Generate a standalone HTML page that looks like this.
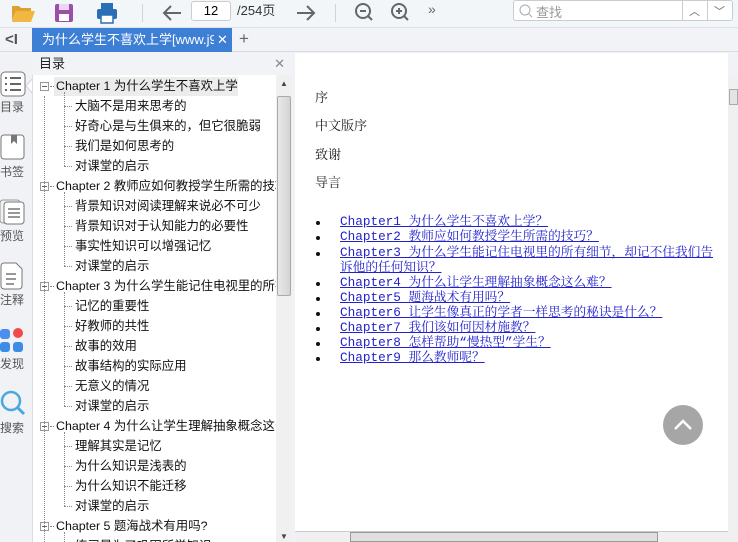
<!DOCTYPE html>
<html><head><meta charset="utf-8"><style>
*{margin:0;padding:0;box-sizing:border-box}
body{width:738px;height:542px;overflow:hidden;background:#f0f2f5;font-family:"Liberation Sans","Noto Sans CJK SC",sans-serif;position:relative}
.abs{position:absolute}
#tb{left:0;top:0;width:738px;height:28px;background:#f3f6f9;border-bottom:1px solid #dde2e8}
#tabbar{left:0;top:28px;width:738px;height:24px;background:#f1f3f6;border-bottom:1px solid #d8dce2}
#tab{left:32px;top:28px;width:200px;height:24px;background:#3e7fd6;color:#fff;font-size:13px;line-height:24px;padding-left:10px;white-space:nowrap;overflow:hidden}
#side{left:0;top:53px;width:32px;height:489px;background:#f0f2f5}
.sl{position:absolute;left:0;width:28px;font-size:12px;color:#555;text-align:left}
#toc{left:32px;top:53px;width:260px;height:489px;background:#fff;border-left:1px solid #d9dde3}
#toch{left:32px;top:53px;width:260px;height:22px;background:#f1f3f6;font-size:13px;line-height:22px;padding-left:7px;color:#222}
.r{position:absolute;font-size:12.4px;color:#111;white-space:nowrap;line-height:18px}
.box{position:absolute;width:9px;height:9px;border:1px solid #999;background:#fff}
.box:after{content:"";position:absolute;left:1px;top:3px;width:5px;height:1px;background:#666}
.dv{position:absolute;border-left:1px dotted #888}
.dh{position:absolute;border-top:1px dotted #888;width:8px}
#vs{left:276px;top:75px;width:16px;height:467px;background:#f0f0f0}
#page{left:295px;top:53px;width:433px;height:478px;background:#fff}
.p{position:absolute;left:315px;font-family:"Liberation Serif","Noto Serif CJK SC",serif;font-size:13px;color:#222}
.li{position:absolute;left:340px;font-family:"Liberation Mono","Noto Serif CJK SC",monospace;font-size:12.7px;color:#2222cc;text-decoration:underline;white-space:nowrap;line-height:15px}
.bu{position:absolute;left:316px;width:4px;height:4px;border-radius:50%;background:#111}
</style></head><body>
<div id="tb" class="abs"></div>
<svg class="abs" style="left:10px;top:2px" width="26" height="22" viewBox="0 0 26 22"><path d="M2 4h7l2 2h10v3H6L2 19z" fill="#e0a030"/><path d="M6 9h19l-4 11H2z" fill="#f0b840"/></svg>
<svg class="abs" style="left:54px;top:3px" width="20" height="20"><rect x="1" y="1" width="18" height="18" rx="2" fill="#9b4fa8"/><rect x="5" y="1" width="10" height="6" fill="#e8d8ee"/><rect x="5" y="11" width="10" height="7" fill="#fff"/></svg>
<svg class="abs" style="left:96px;top:2px" width="22" height="22"><rect x="5" y="1" width="12" height="6" fill="#2a6fb5"/><rect x="1" y="7" width="20" height="10" rx="2" fill="#2a6fb5"/><rect x="5" y="13" width="12" height="8" fill="#fff" stroke="#2a6fb5" stroke-width="1.5"/></svg>
<div class="abs" style="left:142px;top:4px;width:1px;height:18px;background:#d0d4da"></div>
<svg class="abs" style="left:161px;top:3px" width="22" height="20"><path d="M20 10H3M10 3L3 10l7 7" stroke="#666" stroke-width="2" fill="none"/></svg>
<div class="abs" style="left:191px;top:1px;width:40px;height:20px;border:1px solid #c8cdd3;border-radius:3px;background:#fff;font-size:13px;text-align:center;line-height:18px">12</div>
<div class="abs" style="left:237px;top:2px;font-size:13px;color:#333;line-height:18px">/254页</div>
<svg class="abs" style="left:295px;top:3px" width="22" height="20"><path d="M2 10h17M12 3l7 7-7 7" stroke="#666" stroke-width="2" fill="none"/></svg>
<div class="abs" style="left:335px;top:4px;width:1px;height:18px;background:#d0d4da"></div>
<svg class="abs" style="left:353px;top:1px" width="22" height="22"><circle cx="10" cy="10" r="7" stroke="#666" stroke-width="2" fill="none"/><path d="M15 15l4 4M7 10h6" stroke="#666" stroke-width="2"/></svg>
<svg class="abs" style="left:389px;top:1px" width="22" height="22"><circle cx="10" cy="10" r="7" stroke="#666" stroke-width="2" fill="none"/><path d="M15 15l4 4M7 10h6M10 7v6" stroke="#666" stroke-width="2"/></svg>
<div class="abs" style="left:428px;top:1px;font-size:14px;color:#666">»</div>
<div class="abs" style="left:513px;top:0;width:220px;height:21px;border:1px solid #c8cdd3;border-radius:3px;background:#fff"></div>
<svg class="abs" style="left:518px;top:3px" width="16" height="16"><circle cx="7" cy="7" r="5" stroke="#aaa" fill="none"/><path d="M11 11l3 3" stroke="#aaa"/></svg>
<div class="abs" style="left:536px;top:2px;font-size:13px;color:#999">查找</div>
<div class="abs" style="left:682px;top:0;width:1px;height:21px;background:#c8cdd3"></div>
<div class="abs" style="left:707px;top:0;width:1px;height:21px;background:#c8cdd3"></div>
<div class="abs" style="left:689px;top:3px;font-size:11px;color:#666">︿</div>
<div class="abs" style="left:714px;top:3px;font-size:11px;color:#666">﹀</div>

<div id="tabbar" class="abs"></div>
<div class="abs" style="left:5px;top:31px;font-size:15px;color:#555;font-weight:bold">&lt;I</div>
<div id="tab" class="abs">为什么学生不喜欢上学[www.j9p<span style="position:absolute;left:182px;top:0;background:#3e7fd6;padding:0 3px">✕</span></div>
<div class="abs" style="left:239px;top:29px;font-size:17px;color:#666">+</div>

<div id="side" class="abs"></div>
<svg class="abs" style="left:0;top:71px" width="26" height="26"><rect x="1" y="1" width="24" height="24" rx="4" fill="#fff" stroke="#777"/><path d="M5 7h2M10 7h11M5 13h2M10 13h11M5 19h2M10 19h11" stroke="#666" stroke-width="2"/></svg>
<div class="sl" style="top:98px">目录</div>
<svg class="abs" style="left:0;top:134px" width="26" height="26"><rect x="1" y="1" width="23" height="24" rx="3" fill="#fff" stroke="#777"/><path d="M11 1v9l3-3 3 3V1" fill="#777"/></svg>
<div class="sl" style="top:163px">书签</div>
<svg class="abs" style="left:0;top:199px" width="26" height="26"><rect x="0" y="1" width="20" height="23" rx="3" fill="none" stroke="#999"/><rect x="4" y="3" width="20" height="22" rx="3" fill="#fff" stroke="#777"/><path d="M8 10h12M8 14h12M8 18h12" stroke="#777" stroke-width="1.5"/></svg>
<div class="sl" style="top:227px">预览</div>
<svg class="abs" style="left:0;top:262px" width="26" height="28"><path d="M1 4a3 3 0 013-3h12l6 6v17a3 3 0 01-3 3H4a3 3 0 01-3-3z" fill="#fff" stroke="#777"/><path d="M6 12h10M6 17h10M6 22h8" stroke="#777" stroke-width="1.5"/></svg>
<div class="sl" style="top:291px">注释</div>
<div class="abs" style="left:0;top:329px;width:10px;height:10px;border-radius:3px;background:#4a8ef0"></div>
<div class="abs" style="left:13px;top:328px;width:10px;height:10px;border-radius:50%;background:#f04a4a"></div>
<div class="abs" style="left:0;top:342px;width:10px;height:10px;border-radius:3px;background:#3d8de8"></div>
<div class="abs" style="left:13px;top:342px;width:10px;height:10px;border-radius:3px;background:#3d8de8"></div>
<div class="sl" style="top:355px">发现</div>
<svg class="abs" style="left:0;top:390px" width="26" height="26"><circle cx="11" cy="11" r="9" stroke="#4aa8e0" stroke-width="2.5" fill="none"/><path d="M18 18l6 6" stroke="#4aa8e0" stroke-width="3"/></svg>
<div class="sl" style="top:419px">搜索</div>
<svg class="abs" style="left:26px;top:78px" width="8" height="16"><path d="M7 0L0 8l7 8" fill="#fff" stroke="#d0d4da"/></svg>

<div id="toc" class="abs"></div>
<div id="toch" class="abs">目录<span style="position:absolute;right:7px;color:#888;font-size:13px">✕</span></div>
<div class="abs" style="left:54px;top:77px;width:184px;height:19px;background:#ececec"></div>
<div id="vs" class="abs"></div>
<div class="abs" style="left:280px;top:79px;font-size:8px;color:#444">▲</div>
<div class="abs" style="left:277px;top:96px;width:14px;height:200px;border:1px solid #aaa;border-radius:2px;background:linear-gradient(90deg,#e8e8e8,#d4d4d4)"></div>
<div class="abs" style="left:280px;top:532px;font-size:8px;color:#444">▼</div>
<div id="tree"></div>

<div id="page" class="abs"></div>
<div class="abs" style="left:728px;top:75px;width:10px;height:467px;background:#f0f0f0"></div>
<div class="abs" style="left:729px;top:89px;width:9px;height:16px;border:1px solid #aaa;background:#e4e4e4"></div>
<div class="abs" style="left:295px;top:531px;width:433px;height:11px;background:#f0f0f0;border-top:1px solid #ccc"></div>
<div class="abs" style="left:350px;top:532px;width:308px;height:10px;border:1px solid #999;background:#e0e0e0"></div>

<div class="p" style="top:87px">序</div>
<div class="p" style="top:115px">中文版序</div>
<div class="p" style="top:144px">致谢</div>
<div class="p" style="top:172px">导言</div>
<div class="bu" style="top:221px"></div><div class="li" style="top:214px">Chapter1 为什么学生不喜欢上学？</div>
<div class="bu" style="top:236px"></div><div class="li" style="top:229px">Chapter2 教师应如何教授学生所需的技巧？</div>
<div class="bu" style="top:252px"></div><div class="li" style="top:245px">Chapter3 为什么学生能记住电视里的所有细节，却记不住我们告</div>
<div class="li" style="top:260px">诉他的任何知识？</div>
<div class="bu" style="top:282px"></div><div class="li" style="top:275px">Chapter4 为什么让学生理解抽象概念这么难？</div>
<div class="bu" style="top:297px"></div><div class="li" style="top:290px">Chapter5 题海战术有用吗？</div>
<div class="bu" style="top:312px"></div><div class="li" style="top:305px">Chapter6 让学生像真正的学者一样思考的秘诀是什么？</div>
<div class="bu" style="top:327px"></div><div class="li" style="top:320px">Chapter7 我们该如何因材施教？</div>
<div class="bu" style="top:342px"></div><div class="li" style="top:335px">Chapter8 怎样帮助“慢热型”学生？</div>
<div class="bu" style="top:357px"></div><div class="li" style="top:350px">Chapter9 那么教师呢？</div>
<div class="abs" style="left:663px;top:405px;width:40px;height:40px;border-radius:50%;background:#a6a6a6"></div>
<svg class="abs" style="left:663px;top:405px" width="40" height="40"><path d="M12 24l8-8 8 8" stroke="#fff" stroke-width="2.5" fill="none"/></svg>

<script>
var items=[[0,"Chapter 1 为什么学生不喜欢上学"],[1,"大脑不是用来思考的"],[1,"好奇心是与生俱来的，但它很脆弱"],[1,"我们是如何思考的"],[1,"对课堂的启示"],
[0,"Chapter 2 教师应如何教授学生所需的技巧"],[1,"背景知识对阅读理解来说必不可少"],[1,"背景知识对于认知能力的必要性"],[1,"事实性知识可以增强记忆"],[1,"对课堂的启示"],
[0,"Chapter 3 为什么学生能记住电视里的所有细节"],[1,"记忆的重要性"],[1,"好教师的共性"],[1,"故事的效用"],[1,"故事结构的实际应用"],[1,"无意义的情况"],[1,"对课堂的启示"],
[0,"Chapter 4 为什么让学生理解抽象概念这么难"],[1,"理解其实是记忆"],[1,"为什么知识是浅表的"],[1,"为什么知识不能迁移"],[1,"对课堂的启示"],
[0,"Chapter 5 题海战术有用吗?"],[1,"练习是为了巩固所学知识"]];
var h="",y=86;
items.forEach(function(it,i){
 var top=y+i*20;
 if(it[0]==0){h+='<div class="box" style="left:40px;top:'+(top-4)+'px"></div><div class="dh" style="left:50px;top:'+top+'px;width:4px"></div><div class="r" style="left:56px;top:'+(top-9)+'px">'+it[1]+'</div>';
  var n=0;for(var j=i+1;j<items.length&&items[j][0]==1;j++)n++;
  h+='<div class="dv" style="left:64px;top:'+(top+6)+'px;height:'+(n*20-6)+'px"></div>';
 }else h+='<div class="dh" style="left:64px;top:'+top+'px"></div><div class="r" style="left:75px;top:'+(top-9)+'px">'+it[1]+'</div>';
});
h+='<div class="dv" style="left:44px;top:96px;height:446px"></div>';
var t=document.getElementById('tree');t.innerHTML=h;
t.style.cssText="position:absolute;left:0;top:0;width:276px;height:542px;overflow:hidden";
</script>
</body></html>
